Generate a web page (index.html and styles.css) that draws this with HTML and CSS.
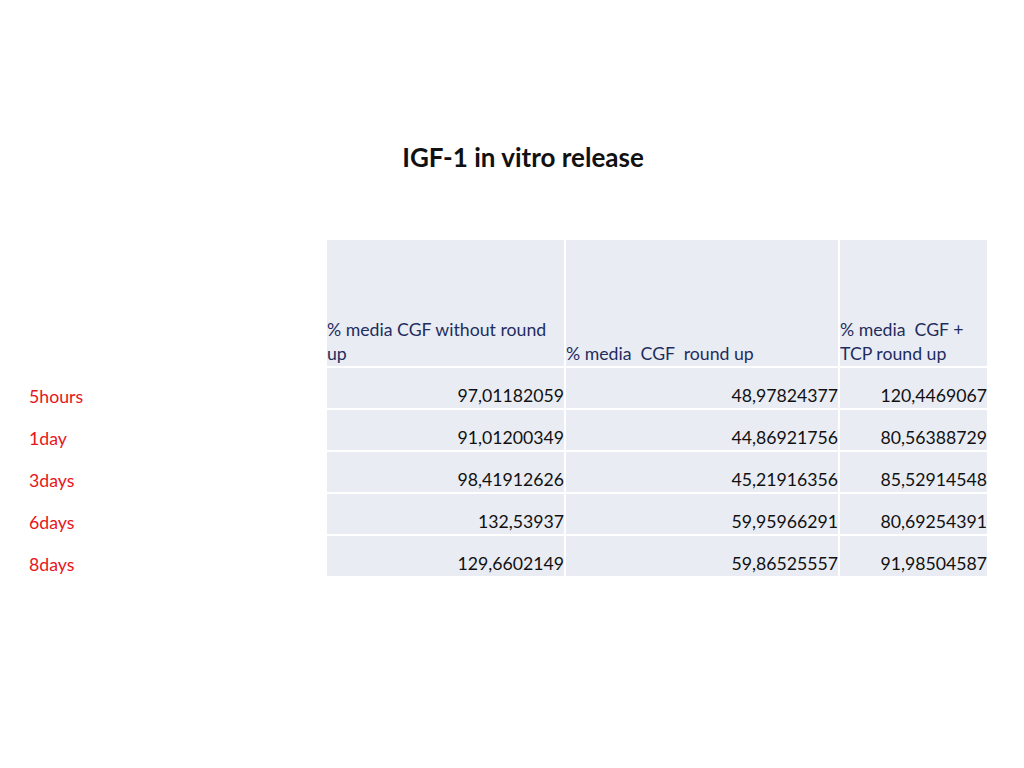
FILE: index.html
```html
<!DOCTYPE html>
<html>
<head>
<meta charset="utf-8">
<link rel="stylesheet" href="styles.css">
</head>
<body>
<h1 class="title">IGF-1 in vitro release</h1>
<table class="data">
  <colgroup>
    <col class="c-label"><col class="c1"><col class="c2"><col class="c3">
  </colgroup>
  <tr class="head">
    <td class="label"></td>
    <th>% media CGF without round up</th>
    <th>% media&nbsp; CGF&nbsp; round up</th>
    <th>% media&nbsp; CGF + TCP round up</th>
  </tr>
  <tr><td class="label">5hours</td><td>97,01182059</td><td>48,97824377</td><td>120,4469067</td></tr>
  <tr><td class="label">1day</td><td>91,01200349</td><td>44,86921756</td><td>80,56388729</td></tr>
  <tr><td class="label">3days</td><td>98,41912626</td><td>45,21916356</td><td>85,52914548</td></tr>
  <tr><td class="label">6days</td><td>132,53937</td><td>59,95966291</td><td>80,69254391</td></tr>
  <tr><td class="label">8days</td><td>129,6602149</td><td>59,86525557</td><td>91,98504587</td></tr>
</table>
</body>
</html>
```
FILE: styles.css
```css
html, body {
  margin: 0;
  padding: 0;
  background: #ffffff;
  font-family: Lato, "Open Sans", sans-serif;
}
.title {
  margin: 0 0 64px 0;
  padding: 140px 0 0 22px;
  text-align: center;
  font-size: 26px;
  font-weight: 700;
  color: #111111;
  line-height: 34px;
}
.data {
  margin-left: 27px;
  border-collapse: collapse;
  table-layout: fixed;
  width: 961px;
}
.c-label { width: 299px; }
.c1 { width: 239px; }
.c2 { width: 274px; }
.c3 { width: 149px; }
.data th, .data td {
  background: #e9ecf3;
  border: 2px solid #ffffff;
  padding: 0;
  vertical-align: bottom;
  font-size: 17.7px;
  line-height: 24px;
}
.data tr { height: 42px; }
.data tr.head { height: 128px; }
.data th {
  font-weight: 400;
  text-align: left;
  color: #1f2c5e;
}
.data td {
  text-align: right;
  color: #111111;
}
.data td.label {
  background: transparent;
  text-align: left;
  color: #e8141a;
  border: none;
  padding-left: 2px;
}
```
